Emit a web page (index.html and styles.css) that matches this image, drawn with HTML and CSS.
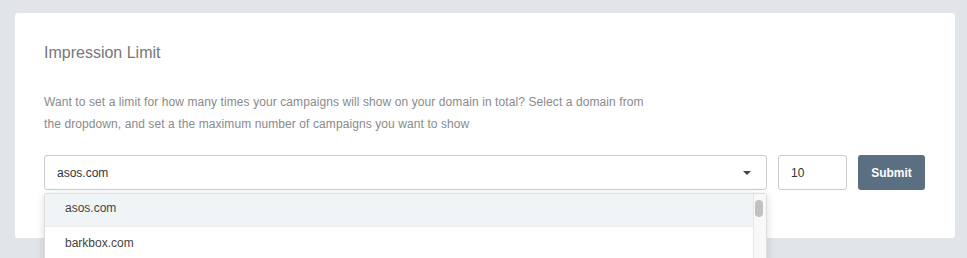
FILE: index.html
```html
<!DOCTYPE html>
<html lang="en">
<head>
    <meta charset="UTF-8">
    <title>Impression Limit</title>
    <link rel="stylesheet" href="styles.css">
</head>
<body>
    <div class="card">
        <h2 class="card-title">Impression Limit</h2>
        <p class="card-text">Want to set a limit for how many times your campaigns will show on your domain in total? Select a domain from<br>the dropdown, and set a the maximum number of campaigns you want to show</p>

        <div class="limit-form">
            <div class="select-wrap">
                <div class="select">
                    <span>asos.com</span>
                    <span class="caret"></span>
                </div>
                <!-- open dropdown -->
                <ul class="dropdown">
                    <li class="active">asos.com</li>
                    <li>barkbox.com</li>
                </ul>
            </div>
            <input class="limit-input" type="text" value="10">
            <button class="submit-button">Submit</button>
        </div>
    </div>
</body>
</html>
```

FILE: styles.css
```css
body {
    margin: 0;
    padding: 13px 12px 20px 15px;
    background-color: #e1e5e9;
    font-family: "Liberation Sans", Arial, sans-serif;
    color: #333;
    overflow: hidden;
}
.card {
    background-color: #fff;
    border-radius: 3px;
    padding: 30px 30px 48px 29px;
}
.card-title {
    margin: 0;
    font-size: 16px;
    line-height: 20px;
    font-weight: normal;
    color: #777;
}
.card-text {
    margin: 28px 0 20px 0;
    font-size: 12px;
    line-height: 22px;
    letter-spacing: 0.09px;
    color: #8a8a8a;
}
.limit-form {
    display: flex;
    align-items: stretch;
    gap: 11px;
}
.select-wrap {
    position: relative;
    width: 723px;
}
.select {
    height: 33px;
    border: 1px solid #ccc;
    border-radius: 3px;
    display: flex;
    align-items: center;
    justify-content: space-between;
    padding: 0 15px 0 12px;
    font-size: 12px;
    color: #333;
}
.caret {
    width: 0;
    height: 0;
    border-left: 4px solid transparent;
    border-right: 4px solid transparent;
    border-top: 4px solid #444;
}
.dropdown {
    position: absolute;
    top: 38px;
    left: 0;
    width: 721px;
    height: 100px;
    margin: 0;
    padding: 0;
    list-style: none;
    background-color: #fff;
    border: 1px solid #ddd;
    border-radius: 3px;
    box-shadow: 0 2px 8px rgba(0,0,0,0.15);
    overflow: hidden;
}
.dropdown::after {
    content: "";
    position: absolute;
    top: 0;
    right: 0;
    width: 12px;
    height: 100%;
    background-color: #f8f8f8;
    border-left: 1px solid #e6e6e6;
}
.dropdown::before {
    content: "";
    position: absolute;
    top: 6px;
    right: 3px;
    width: 8px;
    height: 17px;
    border-radius: 4px;
    background-color: #c1c1c1;
    z-index: 1;
}
.dropdown li {
    height: 32px;
    line-height: 32px;
    padding-left: 20px;
    font-size: 12px;
    color: #444;
    border-bottom: 1px solid #eee;
}
.dropdown li.active {
    height: 28px;
    line-height: 28px;
    padding-bottom: 4px;
    background-color: #eff4f7;
}
.limit-input {
    width: 55px;
    height: 33px;
    box-sizing: content-box;
    padding: 0 0 0 12px;
    border: 1px solid #ccc;
    border-radius: 3px;
    font-family: "Liberation Sans", Arial, sans-serif;
    font-size: 12px;
    color: #333;
    margin: 0;
}
.submit-button {
    width: 67px;
    height: 35px;
    background-color: #5b6f82;
    color: #fff;
    border: none;
    border-radius: 3px;
    font-family: "Liberation Sans", Arial, sans-serif;
    font-size: 12px;
    font-weight: bold;
    cursor: pointer;
    padding: 0;
}
```
